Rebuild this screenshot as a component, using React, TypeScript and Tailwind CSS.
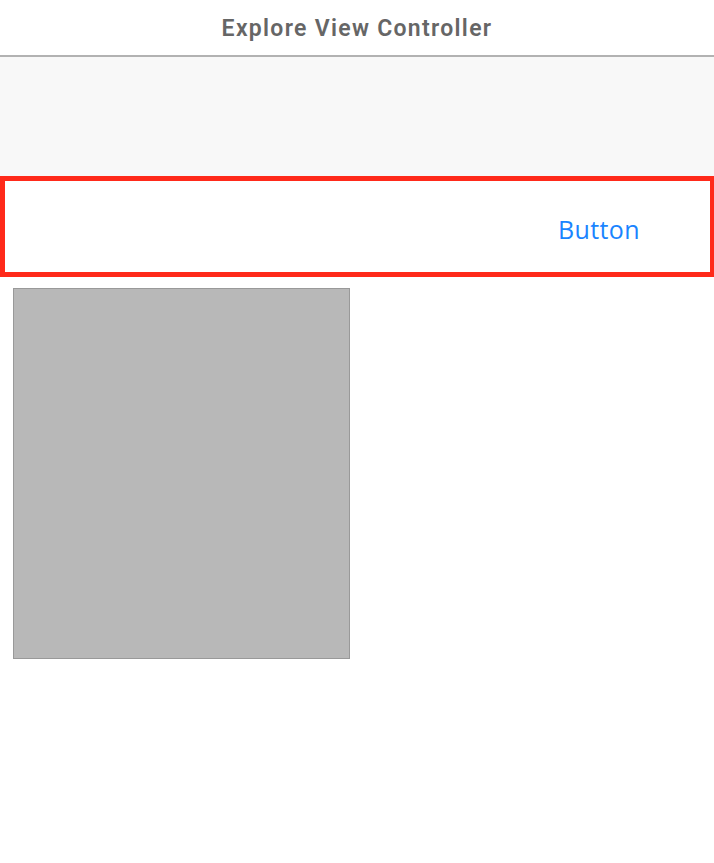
export default function App() {
  return (
    <div className="w-[714px] h-[863px] bg-white flex flex-col" style={{ fontFamily: '"Open Sans", "Liberation Sans", sans-serif' }}>
      <div className="h-[55px] flex items-center justify-center shrink-0 pt-[3px]">
        <span className="text-[23px] font-semibold text-[#666666] tracking-[1.3px]" style={{ fontFamily: 'Roboto, "Liberation Sans", sans-serif' }}>Explore View Controller</span>
      </div>
      <div className="h-[2px] bg-[#b2b2b2] shrink-0" />
      <div className="h-[119px] bg-[#f8f8f8] shrink-0" />
      <div className="h-[101px] border-[5px] border-r-4 border-[#ff2a1a] flex items-center justify-end pr-[70px] pt-[6px] shrink-0">
        <span className="text-[25px] leading-none text-[#1a84ff] tracking-[0.4px]">Button</span>
      </div>
      <div className="pl-[13px] pt-[11px]">
        <div className="w-[337px] h-[371px] bg-[#b8b8b8] border border-[#999999]" />
      </div>
    </div>
  );
}
